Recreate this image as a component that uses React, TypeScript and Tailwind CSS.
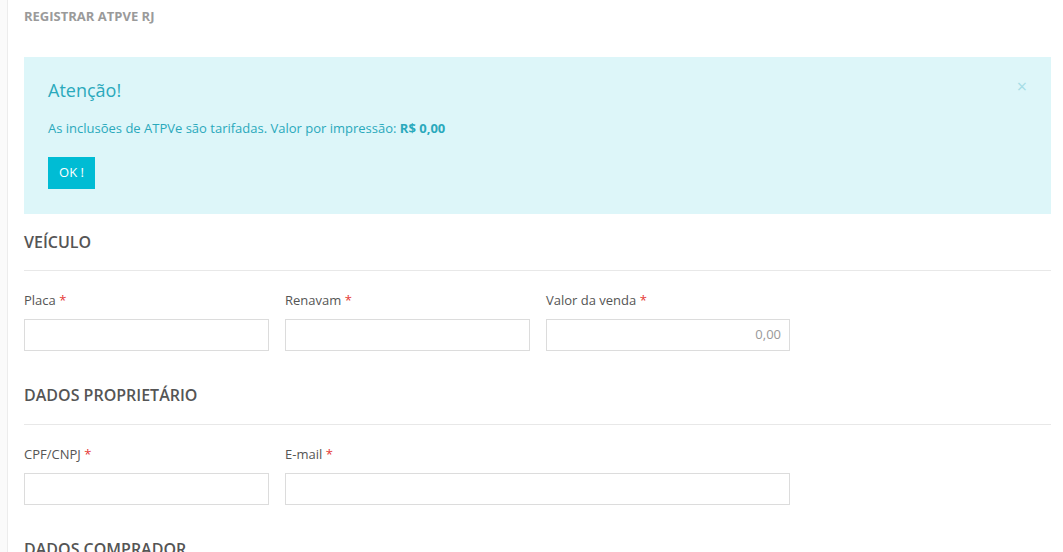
import React from "react";

function Field({ label, className, value }: { label: string; className: string; value?: string }) {
  return (
    <div className={className}>
      <label className="block text-[13px] leading-[18px] text-[#555] mb-[10px]">
        {label} <span className="text-[#e53935]">*</span>
      </label>
      <div className="h-[32px] border border-[#dcdcdc] bg-white flex items-center justify-end px-[8px] text-[13px] text-[#999]">
        {value}
      </div>
    </div>
  );
}

export default function App() {
  return (
    <div className="min-h-[552px] bg-white flex" style={{ fontFamily: '"Open Sans", "Noto Sans", sans-serif' }}>
      <div className="w-[8px] shrink-0 bg-[#fafafa] border-r border-[#ececec]"></div>
      <div className="flex-1 pl-[16px] pr-[12px] overflow-hidden h-[552px]">
        <div className="pt-[8px] h-[57px] text-[13px] font-bold text-[#9a9a9a] leading-[16px]">REGISTRAR ATPVE RJ</div>
        <div className="relative bg-[#ddf6f9] h-[157px] px-[24px] pt-[20px]">
          <div className="text-[18px] leading-[26px] text-[#2aa9bc]">Atenção!</div>
          <div className="mt-[16px] text-[13px] leading-[18px] text-[#2aa9bc]">
            As inclusões de ATPVe são tarifadas. Valor por impressão: <b>R$ 0,00</b>
          </div>
          <button className="mt-[20px] h-[32px] w-[47px] bg-[#00bcd4] text-white text-[13px]">OK !</button>
          <span className="absolute right-[24px] top-[20px] text-[18px] text-[#a6dde6] leading-none">×</span>
        </div>
        <div className="pt-[16px]">
          <div className="text-[16px] font-semibold text-[#555] leading-[24px] pb-[16px] border-b border-[#e8e8e8]">VEÍCULO</div>
          <div className="flex gap-[16px] pt-[20px]">
            <Field label="Placa" className="w-[245px]" />
            <Field label="Renavam" className="w-[245px]" />
            <Field label="Valor da venda" className="w-[244px]" value="0,00" />
          </div>
        </div>
        <div className="pt-[32px]">
          <div className="text-[16px] font-semibold text-[#555] leading-[24px] pb-[17px] border-b border-[#e8e8e8]">DADOS PROPRIETÁRIO</div>
          <div className="flex gap-[16px] pt-[20px]">
            <Field label="CPF/CNPJ" className="w-[245px]" />
            <Field label="E-mail" className="w-[505px]" />
          </div>
        </div>
        <div className="pt-[32px]">
          <div className="text-[16px] font-semibold text-[#555] leading-[24px] pb-[16px] border-b border-[#e8e8e8]">DADOS COMPRADOR</div>
        </div>
      </div>
    </div>
  );
}
